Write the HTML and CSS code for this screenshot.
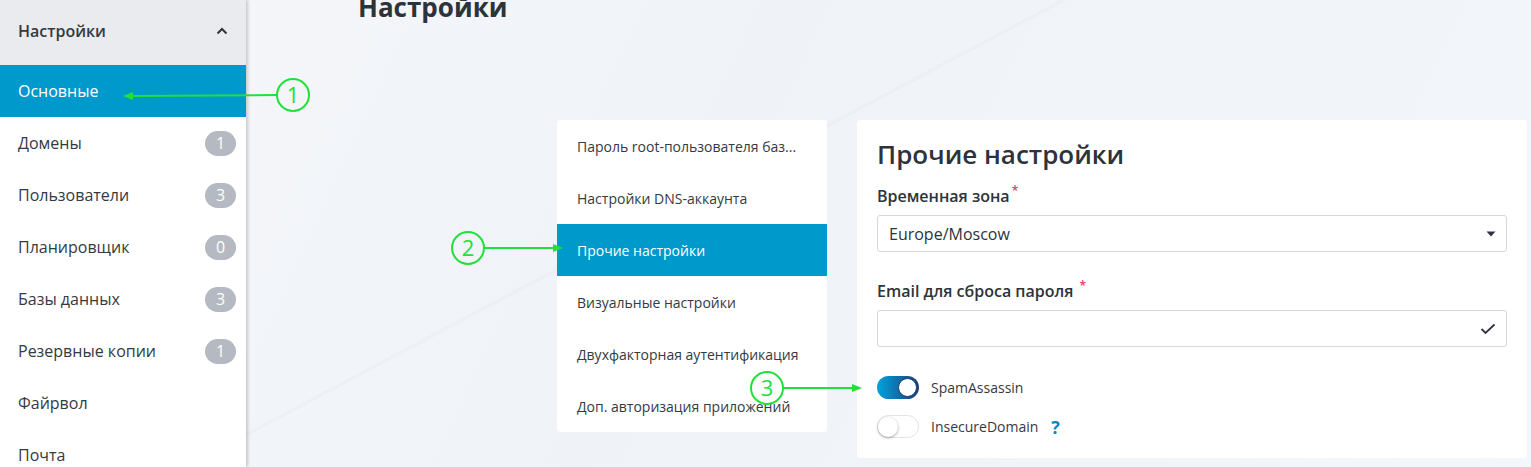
FILE: index.html
```html
<!DOCTYPE html>
<html lang="ru">
<head>
<meta charset="utf-8">
<title>Настройки</title>
<link rel="stylesheet" href="styles.css">
</head>
<body>
<div class="page">
  <aside class="sidebar">
    <div class="side-head">
      <span>Настройки</span>
      <svg class="chev" width="12" height="8" viewBox="0 0 12 8"><path d="M1.5 6.5 L6 2 L10.5 6.5" fill="none" stroke="#2f3640" stroke-width="2"/></svg>
    </div>
    <ul class="side-list">
      <li class="side-item active">Основные</li>
      <li class="side-item">Домены <span class="badge">1</span></li>
      <li class="side-item">Пользователи <span class="badge">3</span></li>
      <li class="side-item">Планировщик <span class="badge">0</span></li>
      <li class="side-item">Базы данных <span class="badge">3</span></li>
      <li class="side-item">Резервные копии <span class="badge">1</span></li>
      <li class="side-item">Файрвол</li>
      <li class="side-item">Почта</li>
    </ul>
  </aside>
  <main class="main">
    <h1 class="page-title">Настройки</h1>
    <div class="content">
      <nav class="sub-nav">
        <div class="sub-item">Пароль root-пользователя баз...</div>
        <div class="sub-item">Настройки DNS-аккаунта</div>
        <div class="sub-item active">Прочие настройки</div>
        <div class="sub-item">Визуальные настройки</div>
        <div class="sub-item">Двухфакторная аутентификация</div>
        <div class="sub-item">Доп. авторизация приложений</div>
      </nav>
      <section class="card">
        <h2 class="card-title">Прочие настройки</h2>
        <div class="field">
          <label class="label">Временная зона<span class="req">*</span></label>
          <div class="control">
            <span>Europe/Moscow</span>
            <svg width="10" height="6" viewBox="0 0 10 6"><path d="M0.5 0.5 H9.5 L5 5.5 Z" fill="#2f3640"/></svg>
          </div>
        </div>
        <div class="field">
          <label class="label">Email для сброса пароля <span class="req">*</span></label>
          <div class="control">
            <span></span>
            <svg width="16" height="12" viewBox="0 0 16 12"><path d="M1.5 6 L5.5 10 L14.5 1.5" fill="none" stroke="#2f3640" stroke-width="1.8"/></svg>
          </div>
        </div>
        <div class="toggles">
          <div class="toggle-row">
            <span class="switch on"><span class="knob"></span></span>
            <span class="toggle-label">SpamAssassin</span>
          </div>
          <div class="toggle-row">
            <span class="switch"><span class="knob"></span></span>
            <span class="toggle-label">InsecureDomain</span>
            <span class="help">?</span>
          </div>
        </div>
      </section>
    </div>
  </main>
  <svg class="notes" width="1531" height="467" viewBox="0 0 1531 467">
    <g fill="none" stroke="#22e03c" stroke-width="2">
      <circle cx="293" cy="95" r="16"/>
      <path d="M277 95 L130 96"/>
      <circle cx="468" cy="248" r="16"/>
      <path d="M484 248 L556 248"/>
      <circle cx="767" cy="388" r="16"/>
      <path d="M783 388 L855 388"/>
    </g>
    <g fill="#22e03c">
      <path d="M123 96 L133 92 L133 100 Z"/>
      <path d="M563 248 L553 244 L553 252 Z"/>
      <path d="M862 388 L852 384 L852 392 Z"/>
    </g>
    <g class="note-num" fill="#22e03c">
      <text x="293" y="103" text-anchor="middle">1</text>
      <text x="468" y="256" text-anchor="middle">2</text>
      <text x="767" y="396" text-anchor="middle">3</text>
    </g>
  </svg>
</div>
</body>
</html>
```

FILE: styles.css
```css
* { box-sizing: border-box; }
html, body { margin: 0; padding: 0; }
body {
  width: 1531px;
  height: 467px;
  overflow: hidden;
  font-family: "Open Sans", "Noto Sans", sans-serif;
  color: #343a42;
  background: #f2f5f9;
}
.page {
  position: relative;
  display: flex;
  width: 1531px;
  height: 467px;
  background:
    linear-gradient(152deg, rgba(255,255,255,0) 0 44%, rgba(228,232,238,0.35) 44% 44.3%, rgba(255,255,255,0) 44.3%),
    linear-gradient(115deg, #f6f8fb 0%, #eff2f7 45%, #f3f6fa 100%);
}
.sidebar {
  width: 246px;
  flex: none;
  background: #fff;
  box-shadow: 2px 0 3px rgba(0,0,0,0.18);
  position: relative;
  z-index: 1;
}
.side-head {
  height: 65px;
  background: #e9ebee;
  display: flex;
  align-items: center;
  justify-content: space-between;
  padding: 0 18px 3px;
  font-size: 16px;
  font-weight: 600;
  color: #343a42;
}
.side-list { list-style: none; margin: 0; padding: 0; }
.side-item {
  height: 52px;
  display: flex;
  align-items: center;
  justify-content: space-between;
  padding: 0 10px 0 18px;
  font-size: 16px;
  color: #343a42;
}
.side-item.active { background: #0099cc; color: #fff; }
.badge {
  width: 31px;
  height: 25px;
  border-radius: 13px;
  background: #b4b9c2;
  color: #fff;
  font-size: 16px;
  display: flex;
  align-items: center;
  justify-content: center;
}
.main {
  flex: 1;
  padding-left: 112px;
}
.page-title {
  margin: -10px 0 0;
  font-size: 26px;
  line-height: 34px;
  font-weight: 700;
  color: #2d333b;
}
.content {
  display: flex;
  align-items: flex-start;
  gap: 30px;
  margin: 96px 0 0 199px;
}
.sub-nav {
  width: 270px;
  flex: none;
  background: #fff;
  border-radius: 3px;
  overflow: hidden;
}
.sub-item {
  height: 52px;
  display: flex;
  align-items: center;
  padding-left: 20px;
  font-size: 14px;
  color: #343a42;
  white-space: nowrap;
}
.sub-item.active { background: #0099cc; color: #fff; }
.card {
  width: 670px;
  height: 338px;
  background: #fff;
  border-radius: 3px;
  padding: 17px 20px 0;
}
.card-title {
  margin: 0;
  font-size: 26px;
  line-height: 34px;
  font-weight: 600;
  color: #2d333b;
}
.field { margin-top: 14px; }
.field + .field { margin-top: 28px; }
.label {
  display: block;
  height: 22px;
  font-size: 16px;
  line-height: 22px;
  font-weight: 600;
  color: #2d333b;
}
.req { color: #f0325a; font-size: 12px; line-height: 0; vertical-align: 7px; margin-left: 2px; }
.control {
  margin-top: 8px;
  height: 37px;
  border: 1px solid #d3d6dc;
  border-radius: 3px;
  display: flex;
  align-items: center;
  justify-content: space-between;
  padding: 0 10px 0 11px;
  font-size: 16px;
  color: #2d333b;
}
.toggles {
  margin-top: 29px;
  display: flex;
  flex-direction: column;
  gap: 16px;
}
.toggle-row {
  display: flex;
  align-items: center;
  gap: 12px;
  height: 23px;
  font-size: 14px;
  color: #343a42;
}
.switch {
  width: 42px;
  height: 23px;
  border-radius: 12px;
  border: 1px solid #e0e3e7;
  background: #fff;
  position: relative;
  flex: none;
}
.switch .knob {
  position: absolute;
  top: 1px;
  left: 0;
  width: 20px;
  height: 20px;
  border-radius: 50%;
  background: #fff;
  box-shadow: 0 1px 3px rgba(0,0,0,0.35);
}
.switch.on {
  border: none;
  background: linear-gradient(90deg, #00a3dd, #1d3d7b);
}
.switch.on .knob {
  top: 2px;
  left: auto;
  right: 2px;
  width: 19px;
  height: 19px;
  box-shadow: none;
  border: 1px solid #1d3d7b;
}
.help { color: #0b86c1; font-weight: 700; font-size: 18px; margin-left: 1px; }
.notes { position: absolute; left: 0; top: 0; pointer-events: none; z-index: 5; }
.note-num text { font-family: "Open Sans", sans-serif; font-size: 22px; }
```
